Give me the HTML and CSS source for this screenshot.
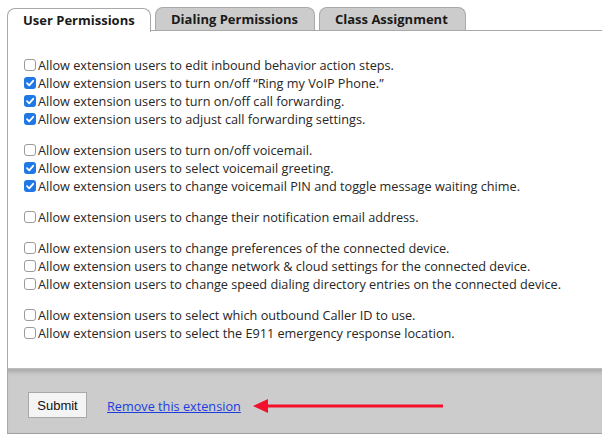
FILE: index.html
```html
<!DOCTYPE html>
<html>
<head>
<meta charset="utf-8">
<link rel="stylesheet" href="styles.css">
</head>
<body>
<div class="wrap">
  <div class="tabs">
    <div class="tab active">User Permissions</div>
    <div class="tab">Dialing Permissions</div>
    <div class="tab">Class Assignment</div>
  </div>
  <div class="panel">
    <div class="content">
      <div class="group">
        <label class="row"><span class="cb"></span>Allow extension users to edit inbound behavior action steps.</label>
        <label class="row"><span class="cb on"></span>Allow extension users to turn on/off “Ring my VoIP Phone.”</label>
        <label class="row"><span class="cb on"></span>Allow extension users to turn on/off call forwarding.</label>
        <label class="row"><span class="cb on"></span>Allow extension users to adjust call forwarding settings.</label>
      </div>
      <div class="group">
        <label class="row"><span class="cb"></span>Allow extension users to turn on/off voicemail.</label>
        <label class="row"><span class="cb on"></span>Allow extension users to select voicemail greeting.</label>
        <label class="row"><span class="cb on"></span>Allow extension users to change voicemail PIN and toggle message waiting chime.</label>
      </div>
      <div class="group">
        <label class="row"><span class="cb"></span>Allow extension users to change their notification email address.</label>
      </div>
      <div class="group">
        <label class="row"><span class="cb"></span>Allow extension users to change preferences of the connected device.</label>
        <label class="row"><span class="cb"></span>Allow extension users to change network &amp; cloud settings for the connected device.</label>
        <label class="row"><span class="cb"></span>Allow extension users to change speed dialing directory entries on the connected device.</label>
      </div>
      <div class="group">
        <label class="row"><span class="cb"></span>Allow extension users to select which outbound Caller ID to use.</label>
        <label class="row"><span class="cb"></span>Allow extension users to select the E911 emergency response location.</label>
      </div>
    </div>
    <div class="footer">
      <button class="btn">Submit</button>
      <a class="link" href="#">Remove this extension</a>
      <svg class="arrow" width="192" height="16" viewBox="0 0 192 16">
        <path d="M0 8 L15 1 L15 6.5 L190 6.5 L190 9.5 L15 9.5 L15 15 Z" fill="#f4102b"/>
      </svg>
    </div>
  </div>
</div>
</body>
</html>
```
FILE: styles.css
```css
html, body {
  margin: 0;
  padding: 0;
  background: #fff;
  overflow: hidden;
}
body {
  font-family: "Open Sans", "DejaVu Sans", sans-serif;
  color: #262626;
}
.wrap {
  padding: 7px 0 0 7px;
}
.tabs {
  display: flex;
  gap: 4px;
  height: 23px;
  position: relative;
  z-index: 1;
}
.tab {
  box-sizing: border-box;
  height: 23px;
  padding: 0 15px;
  border: 1px solid #a9a9a9;
  border-bottom: none;
  border-radius: 8px 8px 0 0;
  background: #cccccc;
  font-weight: 700;
  font-size: 13px;
  line-height: 22px;
  color: #1a1a1a;
}
.tab.active {
  background: #fff;
  height: 24px;
  margin-top: 1px;
  line-height: 23px;
}
.tabs .tab:first-child { width: 144px; }
.tabs .tab:nth-child(2) { width: 160px; }
.tabs .tab:nth-child(3) { width: 147px; }
.panel {
  border-top: 1px solid #a9a9a9;
  border-left: 1px solid #a9a9a9;
  border-bottom: 1px solid #a0a0a0;
}
.content {
  padding: 25px 0 26px 16px;
}
.group + .group {
  margin-top: 13px;
}
.row {
  display: flex;
  align-items: center;
  height: 18px;
  font-size: 12.7px;
  white-space: nowrap;
}
.cb {
  box-sizing: border-box;
  width: 12px;
  height: 12px;
  margin-right: 2px;
  border: 1px solid #9b9b9b;
  border-radius: 3px;
  background: #fff;
  flex: none;
}
.cb.on {
  border: none;
  background: #1f78e6 url("data:image/svg+xml;utf8,<svg xmlns='http://www.w3.org/2000/svg' width='12' height='12'><path d='M3 6.2 L5.2 8.4 L9.2 3.8' fill='none' stroke='white' stroke-width='1.8' stroke-linecap='round' stroke-linejoin='round'/></svg>") no-repeat center;
}
.footer {
  display: flex;
  align-items: center;
  height: 65px;
  box-sizing: border-box;
  padding: 8px 0 0 20px;
  background: #cccccc;
  border-top: 1px solid #bdbdbd;
  box-shadow: inset 0 6px 4px -3px #a9a9a9;
}
.btn {
  box-sizing: border-box;
  width: 59px;
  height: 26px;
  background: #f4f4f4;
  border: 1px solid #a8a8a8;
  border-radius: 0;
  font-family: "Liberation Sans", Arial, sans-serif;
  font-size: 13px;
  color: #111;
  padding: 0;
}
.link {
  margin-left: 20px;
  margin-top: 2px;
  font-size: 12.7px;
  color: #1d3ce0;
  text-decoration: underline;
}
.arrow {
  margin-left: 12px;
  margin-top: 2px;
}
```
